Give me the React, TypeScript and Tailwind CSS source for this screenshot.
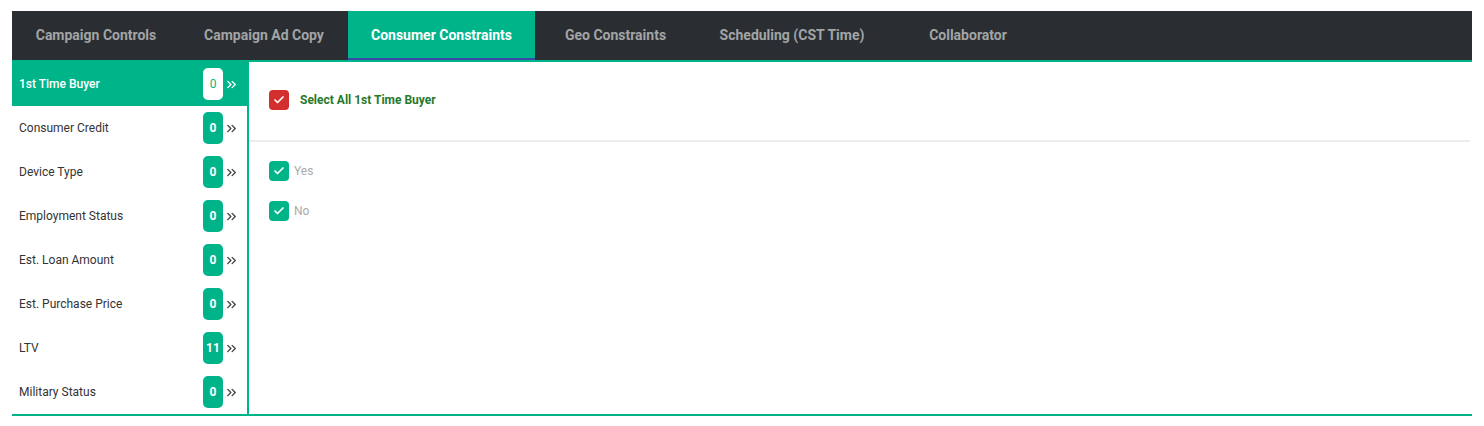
import { ChevronsRight, Check } from 'lucide-react';

const tabs = [
  { label: 'Campaign Controls', width: 'w-[168px]' },
  { label: 'Campaign Ad Copy', width: 'w-[168px]' },
  { label: 'Consumer Constraints', width: 'w-[187px]' },
  { label: 'Geo Constraints', width: 'w-[161px]' },
  { label: 'Scheduling (CST Time)', width: 'w-[192px]' },
  { label: 'Collaborator', width: 'w-[160px]' },
];

const filters = [
  { label: '1st Time Buyer', count: 0 },
  { label: 'Consumer Credit', count: 0 },
  { label: 'Device Type', count: 0 },
  { label: 'Employment Status', count: 0 },
  { label: 'Est. Loan Amount', count: 0 },
  { label: 'Est. Purchase Price', count: 0 },
  { label: 'LTV', count: 11 },
  { label: 'Military Status', count: 0 },
];

const options = ['Yes', 'No'];

export default function App() {
  const activeTab = 'Consumer Constraints';
  const activeFilter = '1st Time Buyer';

  return (
    <div className="bg-white w-[1484px] h-[426px] pt-[11px] px-[12px] font-['Roboto',sans-serif]">
      {/* tab bar */}
      <div className="flex h-[51px] bg-[#2a2e32] border-b-2 border-[#00b48a]">
        {tabs.map((tab) =>
          tab.label === activeTab ? (
            <div
              key={tab.label}
              className={`${tab.width} flex items-center justify-center pt-[1px] bg-[#00b48a] text-white text-[14px] font-bold border-b-2 border-[#3949ab] whitespace-nowrap`}
            >
              {tab.label}
            </div>
          ) : (
            <div
              key={tab.label}
              className={`${tab.width} flex items-center justify-center pb-[1px] text-[#a2a4a6] text-[14px] font-bold whitespace-nowrap`}
            >
              {tab.label}
            </div>
          )
        )}
      </div>

      {/* body */}
      <div className="flex h-[354px] border-b-2 border-[#00b48a]">
        <div className="w-[237px] border-r-2 border-[#00b48a] flex flex-col">
          {filters.map((f) => {
            const active = f.label === activeFilter;
            return (
              <div
                key={f.label}
                className={
                  active
                    ? 'h-[44px] flex items-center bg-[#00b48a] pl-[7px] pr-[8px] text-white'
                    : 'h-[44px] flex items-center pl-[7px] pr-[8px] text-[#333]'
                }
              >
                <span className={active ? 'flex-1 text-[12px] font-medium' : 'flex-1 text-[12px]'}>
                  {f.label}
                </span>
                <span
                  className={
                    active
                      ? 'w-[20px] h-[32px] rounded-[5px] bg-white text-[#00b48a] text-[12px] flex items-center justify-center'
                      : 'w-[20px] h-[32px] rounded-[5px] bg-[#00b48a] text-white text-[12px] font-bold flex items-center justify-center'
                  }
                >
                  {f.count}
                </span>
                <ChevronsRight
                  size={15}
                  strokeWidth={2.2}
                  className={active ? 'ml-[1px] text-white' : 'ml-[1px] text-[#444]'}
                />
              </div>
            );
          })}
        </div>

        <div className="flex-1 flex flex-col">
          <div className="h-[78px] flex items-center pl-[20px] pb-[2px] gap-[11px]">
            <span className="w-[20px] h-[20px] rounded-[4px] bg-[#d32f2f] flex items-center justify-center">
              <Check size={12} strokeWidth={3.5} className="text-white" />
            </span>
            <span className="text-[12px] font-bold text-[#26792a]">Select All 1st Time Buyer</span>
          </div>
          <div className="h-[2px] bg-[#ededed] mr-[2px]" />
          <div className="flex flex-col gap-[20px] pt-[19px] pl-[20px]">
            {options.map((o) => (
              <div key={o} className="flex items-center gap-[5px] h-[20px]">
                <span className="w-[20px] h-[20px] rounded-[4px] bg-[#00b48a] flex items-center justify-center">
                  <Check size={12} strokeWidth={3.5} className="text-white" />
                </span>
                <span className="text-[12px] text-[#aaa]">{o}</span>
              </div>
            ))}
          </div>
        </div>
      </div>
    </div>
  );
}
